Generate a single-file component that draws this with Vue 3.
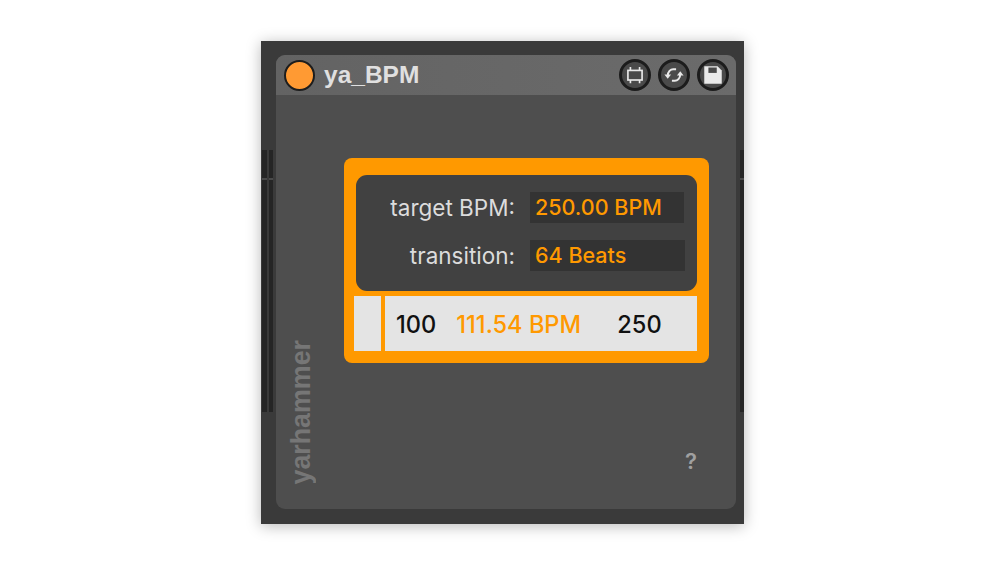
<script setup>
const rows = [
  { label: 'target BPM:', value: '250.00 BPM' },
  { label: 'transition:', value: '64 Beats' },
]
</script>

<template>
  <main class="page">
    <section class="device">
      <div class="rail rail-left"><i></i><i></i></div>
      <div class="panel">
        <header class="head">
          <span class="power"></span>
          <h1>ya_BPM</h1>
          <div class="tools">
            <button type="button" aria-label="Freeze">
              <svg viewBox="0 0 24 24" fill="none" stroke="#e8e8e8" stroke-width="2">
                <rect x="3.500" y="6.500" width="17" height="11.500" />
                <path d="M6.500 2.500v4M17.500 2.500v4M6.500 18v4M17.500 18v4" />
              </svg>
            </button>
            <button type="button" aria-label="Sync">
              <svg viewBox="0 0 24 24" fill="none" stroke="#e8e8e8" stroke-width="2.400">
                <path d="M4.500 13C4.500 8 8 5 11 5h3.500" />
                <path d="M19.500 11c0 5-3.500 8-6.500 8H9.500" />
                <path d="M0.500 11.500l8 0-4 5z" fill="#e8e8e8" stroke="none" />
                <path d="M23.500 12.500l-8 0 4-5z" fill="#e8e8e8" stroke="none" />
              </svg>
            </button>
            <button type="button" aria-label="Save">
              <svg viewBox="0 0 24 24">
                <path d="M1.500 1.500h16l5 5v16h-21z" fill="#eaeaea" />
                <rect x="6.500" y="3" width="10" height="6.500" fill="#4a4a4a" />
              </svg>
            </button>
          </div>
        </header>
        <div class="body">
          <div class="brand">yarhammer</div>
          <div class="card">
            <div class="fields">
              <div v-for="row in rows" :key="row.label" class="field">
                <span class="label">{{ row.label }}</span>
                <span class="value">{{ row.value }}</span>
              </div>
            </div>
            <div class="slider">
              <span class="handle"></span>
              <span class="min">100</span>
              <span class="now">111.54 BPM</span>
              <span class="max">250</span>
            </div>
          </div>
          <span class="help">?</span>
        </div>
      </div>
      <div class="rail rail-right"><i></i></div>
    </section>
  </main>
</template>

<style>
html, body {
  margin: 0;
  background: #fff;
}
</style>

<style scoped>
.page {
  width: 1005px;
  height: 565px;
  padding: 41px 0 0 261px;
  box-sizing: border-box;
  overflow: hidden;
  font-family: Inter, "Liberation Sans", sans-serif;
}

.device {
  position: relative;
  width: 483px;
  height: 483px;
  padding: 14px 8px 15px 15px;
  box-sizing: border-box;
  background: #3a3a3a;
  box-shadow: 0 2px 14px rgba(0, 0, 0, 0.28);
}

.rail {
  position: absolute;
  top: 109px;
  height: 262px;
  display: flex;
  gap: 2px;
}

.rail i {
  display: block;
  width: 4px;
  background: linear-gradient(#252525 0 28px, #4a4a4a 28px 30px, #252525 30px);
}

.rail-left { left: 1px; }
.rail-left i:first-child { width: 5px; }
.rail-right { right: 0; }

.panel {
  height: 100%;
  display: flex;
  flex-direction: column;
  border-radius: 9px;
  overflow: hidden;
  background: #4e4e4e;
}

.head {
  height: 40px;
  flex: none;
  display: flex;
  align-items: center;
  padding: 0 8px;
  background: linear-gradient(90deg, #636363, #6b6b6b);
  box-sizing: border-box;
}

.power {
  width: 27px;
  height: 27px;
  border: 2px solid #1d1d1d;
  border-radius: 50%;
  background: #ff9a33;
}

h1 {
  margin: 0 0 0 9px;
  font-size: 24.500px;
  font-weight: 700;
  color: #e0e0e0;
  font-family: "Liberation Sans", sans-serif;
}

.tools {
  margin-left: auto;
  display: flex;
  gap: 7px;
  margin-right: -1px;
}

.tools button {
  width: 32px;
  height: 32px;
  padding: 3px;
  box-sizing: border-box;
  border: 3px solid #1c1c1c;
  border-radius: 50%;
  background: #4a4a4a;
  display: block;
}

.tools svg {
  display: block;
  width: 100%;
  height: 100%;
}

.body {
  position: relative;
  flex: 1;
  padding: 63px 27px 0 68px;
}

.brand {
  position: absolute;
  left: 10px;
  bottom: 25px;
  writing-mode: vertical-rl;
  transform: rotate(180deg);
  font-family: "Liberation Sans", sans-serif;
  font-size: 26.800px;
  font-weight: 700;
  color: #767676;
}

.card {
  height: 205px;
  padding: 17px 12px 12px 10px;
  box-sizing: border-box;
  background: #ff9900;
  border-radius: 8px;
  display: flex;
  flex-direction: column;
  gap: 5px;
}

.fields {
  height: 116px;
  margin-left: 2px;
  flex: none;
  box-sizing: border-box;
  padding-top: 17px;
  display: flex;
  flex-direction: column;
  gap: 17px;
  background: #414141;
  border-radius: 11px;
}

.field {
  display: flex;
  align-items: center;
  height: 31px;
}

.label {
  width: 159px;
  text-align: right;
  font-size: 22.500px;
  color: #dcdcdc;
}

.value {
  width: 154px;
  height: 31px;
  margin-left: 15px;
  padding-left: 5px;
  box-sizing: border-box;
  line-height: 31px;
  background: #333;
  color: #ff9900;
  font-size: 21.500px;
  font-weight: 500;
}

.field:last-child .value {
  width: 155px;
}

.slider {
  position: relative;
  flex: 1;
  display: flex;
  align-items: center;
  padding-top: 1px;
  background: #e4e4e4;
  font-size: 23.600px;
  font-weight: 500;
  color: #111;
}

.handle {
  position: absolute;
  left: 27px;
  top: 0;
  bottom: 0;
  width: 4px;
  background: #ff9900;
}

.min { margin-left: 42px; }
.now { margin-left: 20px; width: 161px; color: #ff9900; }

.help {
  position: absolute;
  right: 39px;
  bottom: 35px;
  font-family: Inter, sans-serif;
  font-size: 22px;
  font-weight: 600;
  color: #a0a0a0;
}
</style>
